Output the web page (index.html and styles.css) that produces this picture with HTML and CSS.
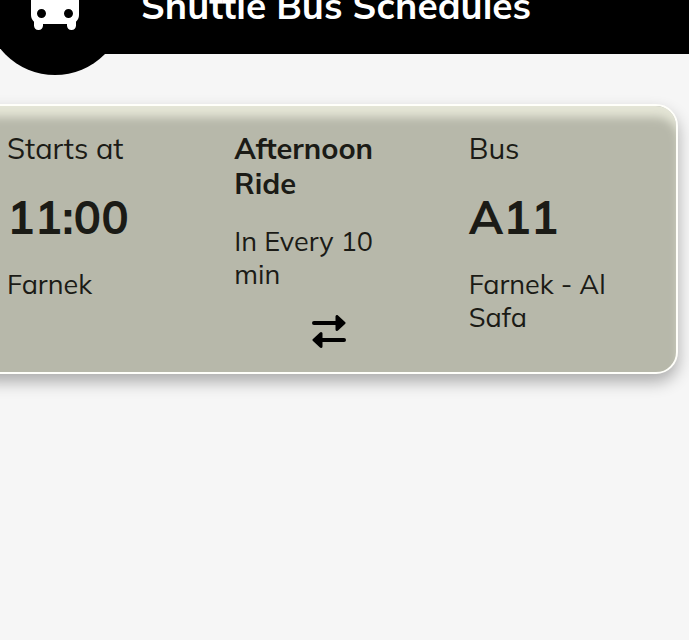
FILE: index.html
```html
<!DOCTYPE html>
<html lang="en">
<head>
<meta charset="utf-8">
<meta name="viewport" content="width=device-width, initial-scale=1">
<title>Shuttle Bus Schedules</title>
<link rel="stylesheet" href="styles.css">
</head>
<body>
<header class="header">
  <div class="badge">
    <svg class="bus" viewBox="0 0 24 24" aria-hidden="true"><path d="M4 16c0 .88.39 1.670 1 2.220V19.500c0 .8.6 1.500 1.500 1.500s1.500-.7 1.500-1.500V19h8v.5c0 .8.6 1.500 1.500 1.500s1.500-.7 1.500-1.500v-1.280c.61-.55 1-1.340 1-2.220V6c0-3.500-3.580-4-8-4s-8 .5-8 4v10zm3.500 1c-.83 0-1.500-.67-1.500-1.500S6.670 14 7.500 14s1.500.67 1.500 1.500S8.330 17 7.500 17zm9 0c-.83 0-1.500-.67-1.500-1.500s.67-1.500 1.500-1.500 1.500.67 1.500 1.500-.67 1.500-1.500 1.500zm1.500-6H6V6h12v5z"/></svg>
  </div>
  <h1 class="title">Shuttle Bus Schedules</h1>
</header>
<main>
  <section class="card">
    <div class="column">
      <p class="label">Starts at</p>
      <p class="value">11:00</p>
      <p class="detail">Farnek</p>
    </div>
    <div class="column">
      <h2 class="label ride">Afternoon Ride</h2>
      <p class="detail">In Every 10 min</p>
      <button class="swap" type="button" aria-label="Swap direction">
        <svg class="arrows" viewBox="0 0 34 34" aria-hidden="true"><path d="M2 8h24M8 25h24" stroke="currentColor" stroke-width="4" stroke-linecap="round"/><path d="M25 1.500v13l7-6.500zM9 18.500v13l-7-6.500z" fill="currentColor" stroke="currentColor" stroke-width="3" stroke-linejoin="round"/></svg>
      </button>
    </div>
    <div class="column">
      <p class="label">Bus</p>
      <p class="value">A11</p>
      <p class="detail">Farnek - Al Safa</p>
    </div>
  </section>
</main>
</body>
</html>
```
FILE: styles.css
```css
* {
  box-sizing: border-box;
}

body {
  min-height: 100vh;
  margin: 0;
  overflow: hidden;
  background: #f6f6f6;
  color: #1b1b16;
  font-family: Mulish, Lato, "Open Sans", sans-serif;
  font-variant-ligatures: none;
}

h1, h2, p {
  margin: 0;
}

.header {
  display: flex;
  align-items: center;
  height: 98px;
  margin-top: -44px;
  color: #fff;
}

.badge {
  position: relative;
  display: flex;
  flex: none;
  align-items: center;
  justify-content: center;
  width: 140px;
  height: 140px;
  margin-left: -15px;
  padding-bottom: 4px;
  border-radius: 50%;
  background: #000;
}

.bus {
  width: 72px;
  height: 72px;
  fill: currentColor;
}

.title {
  flex: 1;
  margin-left: -64px;
  padding-left: 80px;
  background: #000;
  font-size: 37px;
  line-height: 98px;
  font-weight: 700;
}

.card {
  display: grid;
  grid-template-columns: 147fr 154fr 151fr;
  gap: 80px;
  margin: 50px 11px 0 -30px;
  padding: 25px 56px 23px 35px;
  border: 2px solid #fffffa;
  border-radius: 22px;
  background: #b7b8aa;
  box-shadow: 0 8px 16px rgba(0, 0, 0, 0.3), inset 0 14px 10px -3px #e4e5d6;
}

.label {
  font-size: 29px;
  line-height: 35px;
  font-weight: 400;
}

.ride {
  margin-bottom: 24px;
  font-weight: 700;
}

.value {
  margin: 23px 0;
  font-size: 46px;
  line-height: 56px;
  font-weight: 700;
}

.detail {
  font-size: 27px;
  line-height: 33px;
}

.swap {
  display: block;
  margin: 24px 43px 0 auto;
  padding: 0;
  border: 0;
  background: none;
  color: #000;
}

.arrows {
  display: block;
  width: 34px;
  height: 34px;
}
```
